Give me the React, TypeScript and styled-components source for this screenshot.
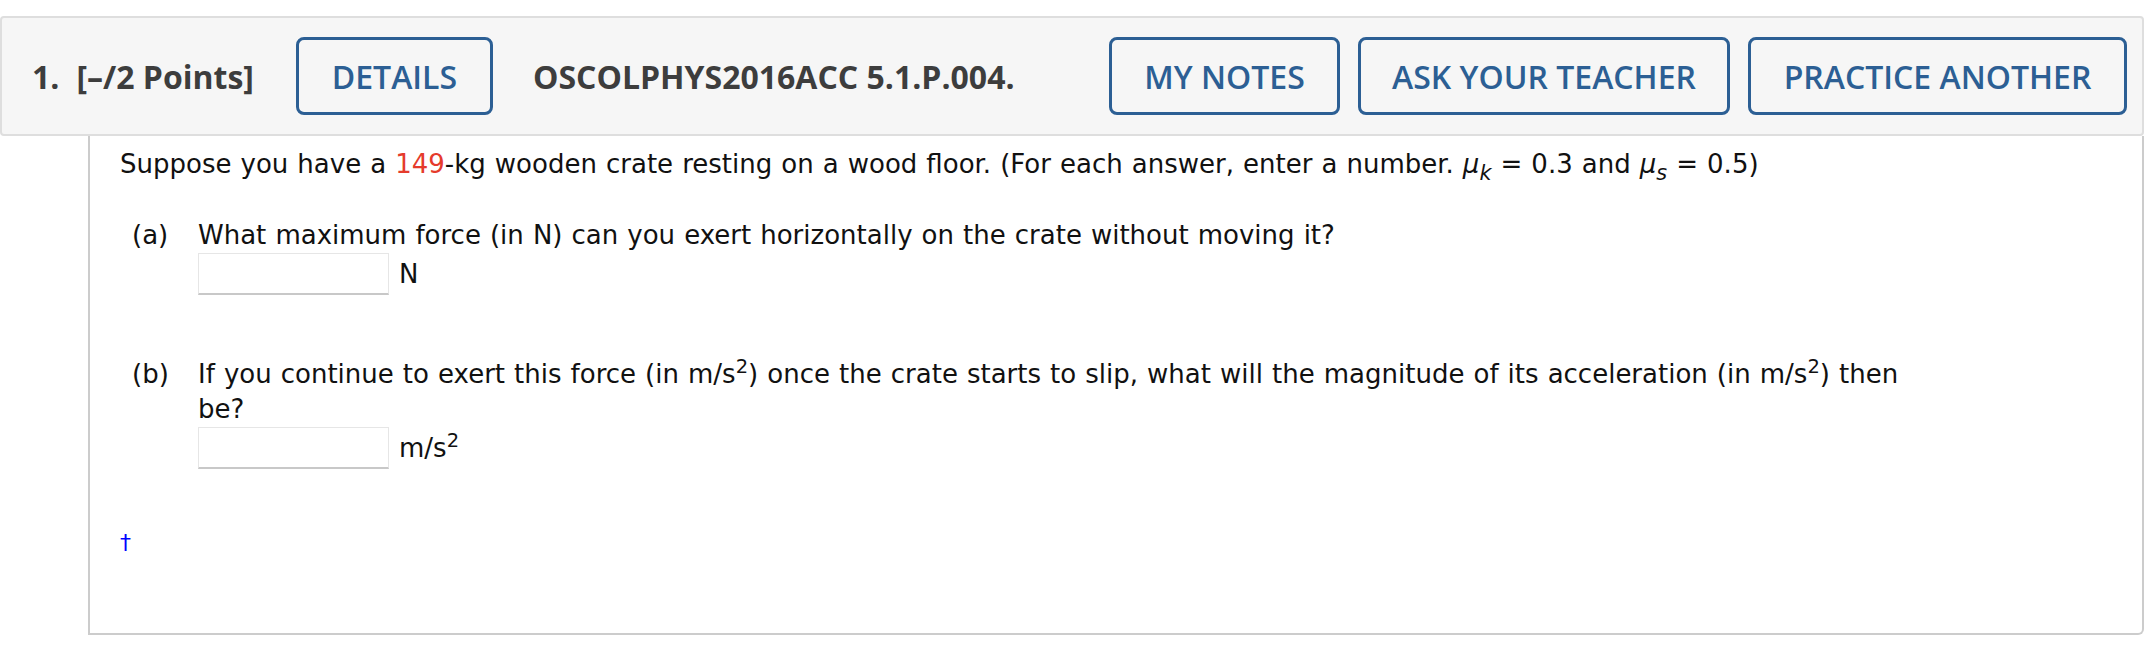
import styled, { createGlobalStyle } from "styled-components";

const GlobalStyle = createGlobalStyle`
  body {
    margin: 0;
    background: #ffffff;
    font-family: "DejaVu Sans", Verdana, sans-serif;
  }
`;

const Page = styled.div`
  padding-top: 16px;
`;

const QuestionHeader = styled.header`
  display: flex;
  align-items: center;
  height: 120px;
  box-sizing: border-box;
  padding: 0 15px 0 30px;
  background-color: #f6f6f6;
  border: 2px solid #dedede;
  border-radius: 4px;
  font-family: "Open Sans", "Liberation Sans", sans-serif;
  color: #3d3d3d;
`;

const Number = styled.span`
  font-size: 32px;
  font-weight: 700;
  margin-right: 17px;
`;

const Points = styled.span`
  font-size: 32px;
  font-weight: 700;
  margin-right: 42px;
`;

const Code = styled.span`
  font-size: 32px;
  font-weight: 700;
  margin-left: 40px;
`;

const Actions = styled.div`
  display: flex;
  gap: 18px;
  margin-left: auto;
`;

const HeaderButton = styled.button<{ width: number }>`
  width: ${({ width }) => width}px;
  height: 78px;
  box-sizing: border-box;
  border: 3px solid #2c5f94;
  border-radius: 8px;
  background: transparent;
  color: #2c5f94;
  font-family: "Open Sans", "Liberation Sans", sans-serif;
  font-size: 32px;
  font-weight: 600;
  padding: 0;
  cursor: pointer;
`;

const QuestionBody = styled.section`
  margin-left: 88px;
  border: 2px solid #cccccc;
  border-top: none;
  border-bottom-right-radius: 6px;
  padding: 11px 30px 73px 30px;
  font-size: 26px;
  word-spacing: 0.8px;
  line-height: 35px;
  color: #111111;
`;

const Intro = styled.p`
  margin: 0;
`;

const Red = styled.span`
  color: #e53b2c;
`;

const Mu = styled.i`
  font-style: italic;
`;

const Sub = styled.sub`
  font-size: 0.8em;
  font-style: italic;
  line-height: 0;
  vertical-align: -0.35em;
`;

const Sup = styled.sup`
  font-size: 0.75em;
  line-height: 0;
  vertical-align: 0.5em;
`;

const Part = styled.div<{ gap: number }>`
  display: grid;
  grid-template-columns: 66px 1fr;
  margin-left: 12px;
  margin-top: ${({ gap }) => gap}px;
`;

const PartText = styled.div`
  max-width: 1730px;
`;

const AnswerRow = styled.div`
  display: flex;
  align-items: center;
  gap: 10px;
`;

const AnswerInput = styled.input`
  width: 191px;
  height: 42px;
  box-sizing: border-box;
  border: 1px solid #e6e6e6;
  border-bottom: 2px solid #c8c8c8;
  background: #ffffff;
  font-size: 24px;
`;

const Footnote = styled.div`
  margin-top: 56px;
  color: #0000ff;
  font-size: 22px;
`;

export default function App() {
  return (
    <Page>
      <GlobalStyle />
      <QuestionHeader>
        <Number>1.</Number>
        <Points>[–/2 Points]</Points>
        <HeaderButton width={197}>DETAILS</HeaderButton>
        <Code>OSCOLPHYS2016ACC 5.1.P.004.</Code>
        <Actions>
          <HeaderButton width={231}>MY NOTES</HeaderButton>
          <HeaderButton width={372}>ASK YOUR TEACHER</HeaderButton>
          <HeaderButton width={379}>PRACTICE ANOTHER</HeaderButton>
        </Actions>
      </QuestionHeader>
      <QuestionBody>
        <Intro>
          Suppose you have a <Red>149</Red>-kg wooden crate resting on a wood
          floor. (For each answer, enter a number. <Mu>μ</Mu>
          <Sub>k</Sub> = 0.3 and <Mu>μ</Mu>
          <Sub>s</Sub> = 0.5)
        </Intro>
        <Part gap={36}>
          <span>(a)</span>
          <div>
            <PartText>
              What maximum force (in N) can you exert horizontally on the
              crate without moving it?
            </PartText>
            <AnswerRow>
              <AnswerInput type="text" />
              <span>N</span>
            </AnswerRow>
          </div>
        </Part>
        <Part gap={62}>
          <span>(b)</span>
          <div>
            <PartText>
              If you continue to exert this force (in m/s<Sup>2</Sup>) once
              the crate starts to slip, what will the magnitude of its
              acceleration (in m/s<Sup>2</Sup>) then be?
            </PartText>
            <AnswerRow>
              <AnswerInput type="text" />
              <span>
                m/s<Sup>2</Sup>
              </span>
            </AnswerRow>
          </div>
        </Part>
        <Footnote>†</Footnote>
      </QuestionBody>
    </Page>
  );
}
